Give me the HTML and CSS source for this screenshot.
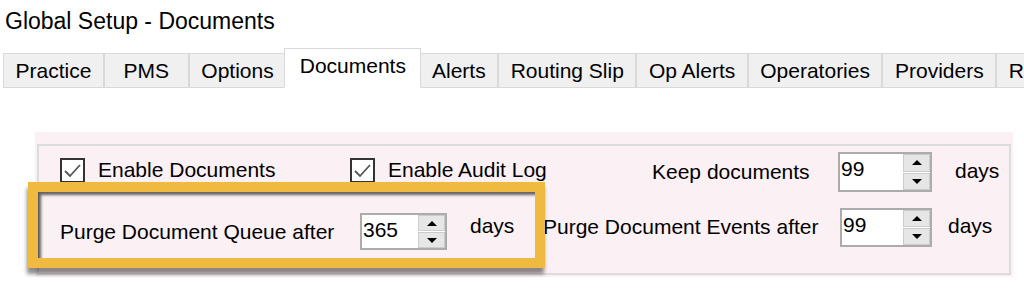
FILE: index.html
```html
<!DOCTYPE html>
<html lang="en">

<head>
    <meta charset="UTF-8" />
    <meta name="viewport" content="width=device-width, initial-scale=1.0" />
    <title>Global Setup - Documents</title>
    <link rel="stylesheet" href="styles.css">
</head>

<body>
    <!-- window title -->
    <div class="window-title">Global Setup - Documents</div>

    <!-- tab strip -->
    <div class="tab-strip">
        <div class="tab">Practice</div>
        <div class="tab tab-min">PMS</div>
        <div class="tab">Options</div>
        <div class="tab active">Documents</div>
        <div class="tab">Alerts</div>
        <div class="tab">Routing Slip</div>
        <div class="tab">Op Alerts</div>
        <div class="tab">Operatories</div>
        <div class="tab">Providers</div>
        <div class="tab">Reports</div>
    </div>

    <!-- documents page -->
    <div class="page-panel">
        <div class="group-box">
            <div class="form-row row-top">
                <label class="check">
                    <span class="check-box">
                        <svg viewBox="0 0 21 21" width="21" height="21">
                            <polyline points="3,11 8,16 18,5" fill="none" stroke="#555" stroke-width="1.8" />
                        </svg>
                    </span>
                    <span>Enable Documents</span>
                </label>
                <label class="check">
                    <span class="check-box">
                        <svg viewBox="0 0 21 21" width="21" height="21">
                            <polyline points="3,11 8,16 18,5" fill="none" stroke="#555" stroke-width="1.8" />
                        </svg>
                    </span>
                    <span>Enable Audit Log</span>
                </label>
                <span class="field-label">Keep documents</span>
                <div class="spinner spin-keep">
                    <span class="spin-value">99</span>
                    <span class="spin-buttons">
                        <span class="spin-btn"><i class="arrow-up"></i></span>
                        <span class="spin-btn"><i class="arrow-down"></i></span>
                    </span>
                </div>
                <span class="unit unit-gap">days</span>
            </div>

            <div class="form-row row-bottom">
                <span class="field-label shifted">Purge Document Queue after</span>
                <div class="spinner spin-queue shifted">
                    <span class="spin-value">365</span>
                    <span class="spin-buttons">
                        <span class="spin-btn"><i class="arrow-up"></i></span>
                        <span class="spin-btn"><i class="arrow-down"></i></span>
                    </span>
                </div>
                <span class="unit unit-gap">days</span>
                <span class="field-label">Purge Document Events after</span>
                <div class="spinner spin-events">
                    <span class="spin-value">99</span>
                    <span class="spin-buttons">
                        <span class="spin-btn"><i class="arrow-up"></i></span>
                        <span class="spin-btn"><i class="arrow-down"></i></span>
                    </span>
                </div>
                <span class="unit unit-gap-small">days</span>
            </div>
        </div>
    </div>

    <!-- highlight annotation drawn over the form -->
    <div class="highlight"></div>
</body>

</html>
```

FILE: styles.css
```css
html,
body {
    margin: 0;
    height: 100%;
    background-color: #ffffff;
    color: #000000;
    font-family: "Liberation Sans", Arial, sans-serif;
    overflow: hidden;
}

.window-title {
    font-size: 23px;
    line-height: 28px;
    padding: 7px 0 0 5px;
    height: 28px;
}

.tab-strip {
    display: flex;
    align-items: flex-end;
    margin-top: 13px;
    margin-left: 3px;
    height: 40px;
    white-space: nowrap;
    overflow: hidden;
}

.tab {
    flex-shrink: 0;
    box-sizing: border-box;
    height: 35px;
    padding: 5px 11.5px 0 11.5px;
    font-size: 21px;
    line-height: 24px;
    background-color: #f0f0f0;
    border: 1px solid #d9d9d9;
    text-align: center;
}

.tab-min {
    min-width: 85px;
}

.tab.active {
    position: relative;
    z-index: 1;
    height: 40px;
    margin: 0 -2px 0 -2px;
    padding: 5px 14.5px 0 14.5px;
    background-color: #ffffff;
    border-bottom-color: #ffffff;
}

.page-panel {
    margin: 44px 0 0 35px;
    width: 978px;
    box-sizing: border-box;
    padding: 12px 2px 2px 2px;
    background-color: #fbf0f4;
}

.group-box {
    box-sizing: border-box;
    height: 131px;
    border: 2px solid #dcdcdc;
    padding: 6px 0 0 21px;
}

.form-row {
    display: grid;
    align-items: center;
    height: 40px;
    font-size: 21px;
    white-space: nowrap;
}

.row-top {
    grid-template-columns: 290px 302px 186px 94px auto;
}

.row-bottom {
    margin-top: 12px;
    grid-template-columns: 300px 87px 96px 297px 92px auto;
}

.unit-gap {
    padding-left: 23px;
}

.unit-gap-small {
    padding-left: 16px;
}

.shifted {
    margin-top: 9px;
}

.check {
    display: flex;
    align-items: center;
    gap: 13px;
    margin-top: -4px;
}

.check-box {
    width: 21px;
    height: 21px;
    border: 2px solid #333333;
    background-color: #ffffff;
    display: flex;
}

.unit {
    margin-top: -2px;
}

.spinner {
    box-sizing: border-box;
    display: flex;
    border: 2px solid #acacac;
    background-color: #ffffff;
}

.spin-keep {
    height: 40px;
}

.spin-queue {
    height: 37px;
}

.spin-events {
    height: 39px;
}

.spin-value {
    flex: 1;
    padding-left: 1px;
    line-height: 30px;
}

.spin-buttons {
    width: 27px;
    display: flex;
    flex-direction: column;
    gap: 1px;
    background-color: #ffffff;
}

.spin-btn {
    flex: 1;
    display: flex;
    align-items: center;
    justify-content: center;
    background-color: #e6e6e6;
    border: 1px solid #cccccc;
}

.arrow-up,
.arrow-down {
    width: 0;
    height: 0;
    border-left: 5px solid transparent;
    border-right: 5px solid transparent;
}

.arrow-up {
    border-bottom: 5px solid #000000;
}

.arrow-down {
    border-top: 5px solid #000000;
}

/* gold annotation frame around the queue setting */
.highlight {
    position: absolute;
    left: 28px;
    top: 182px;
    width: 497px;
    height: 66px;
    border: 10px solid #f0b93f;
    box-shadow: inset 3px 3px 3px rgba(0, 0, 0, 0.6), -1px 6px 4px rgba(0, 0, 0, 0.45);
}
```
